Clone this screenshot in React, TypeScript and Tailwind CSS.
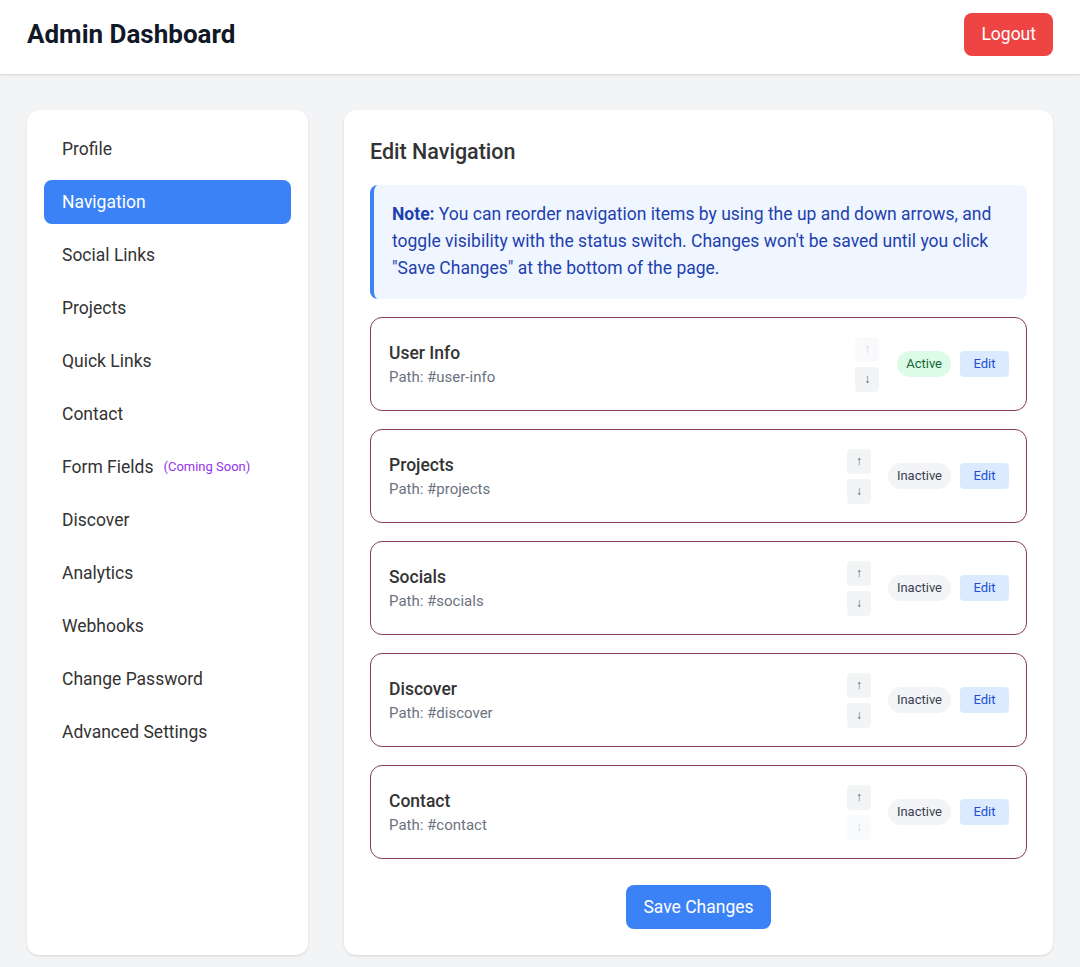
import { useState } from 'react'

interface NavItem {
  id: string
  label: string
  path: string
  active: boolean
}

const sidebarItems = [
  'Profile',
  'Navigation',
  'Social Links',
  'Projects',
  'Quick Links',
  'Contact',
  'Form Fields',
  'Discover',
  'Analytics',
  'Webhooks',
  'Change Password',
  'Advanced Settings',
]

const initialNav: NavItem[] = [
  { id: 'user-info', label: 'User Info', path: '#user-info', active: true },
  { id: 'projects', label: 'Projects', path: '#projects', active: false },
  { id: 'socials', label: 'Socials', path: '#socials', active: false },
  { id: 'discover', label: 'Discover', path: '#discover', active: false },
  { id: 'contact', label: 'Contact', path: '#contact', active: false },
]

export default function App() {
  const [selected, setSelected] = useState('Navigation')
  const [items, setItems] = useState<NavItem[]>(initialNav)

  const move = (index: number, dir: number) => {
    const target = index + dir
    if (target < 0 || target >= items.length) return
    const next = [...items]
    const tmp = next[index]
    next[index] = next[target]
    next[target] = tmp
    setItems(next)
  }

  const toggle = (id: string) => {
    setItems(items.map(i => (i.id === id ? { ...i, active: !i.active } : i)))
  }

  return (
    <div className="min-h-screen bg-[#f3f4f6] font-['Roboto','Noto_Sans',sans-serif]">
      {/* Header */}
      <header className="h-[74px] bg-white shadow-sm flex items-center justify-between px-[27px] pb-[5px]">
        <h1 className="text-[26px] font-bold text-[#111827]">Admin Dashboard</h1>
        <button className="h-[43px] px-[17px] bg-[#ef4444] text-white text-[17.5px] rounded-lg">Logout</button>
      </header>

      <div className="flex gap-[36px] px-[27px] pt-[36px] pb-[36px]">
        {/* Sidebar */}
        <aside className="w-[281px] shrink-0 bg-white rounded-xl px-[17px] pt-[17px] pb-[17px] flex flex-col gap-[9px] shadow-sm">
          {sidebarItems.map(name => (
            <button
              key={name}
              onClick={() => setSelected(name)}
              className={
                selected === name
                  ? 'h-[44px] w-full text-left pl-[18px] rounded-lg bg-[#3b82f6] text-white text-[17.5px] flex items-center'
                  : 'h-[44px] w-full text-left pl-[18px] rounded-lg text-[#333333] text-[17.5px] flex items-center'
              }
            >
              {name}
              {name === 'Form Fields' && (
                <span className="ml-[10px] text-[13px] text-[#9333ea]">(Coming Soon)</span>
              )}
            </button>
          ))}
        </aside>

        {/* Main */}
        <main className="flex-1 bg-white rounded-xl px-[26px] pt-[28px] pb-[26px] shadow-sm">
          <h2 className="text-[21.5px] font-medium text-[#333333] leading-[28px]">Edit Navigation</h2>

          <div className="mt-[19px] bg-[#eff6ff] border-l-4 border-[#3b82f6] rounded-lg pl-[18px] pr-[14px] pt-[16px] pb-[17px] text-[17.5px] leading-[27px] text-[#1e40af]">
            <span className="font-bold">Note:</span> You can reorder navigation items by using the up and down arrows, and toggle visibility with the status switch. Changes won't be saved until you click "Save Changes" at the bottom of the page.
          </div>

          <div className="mt-[18px] flex flex-col gap-[18px]">
            {items.map((item, idx) => (
              <div
                key={item.id}
                className="h-[94px] border border-[#8a3a4e] rounded-xl pl-[18px] pr-[17px] flex items-center justify-between"
              >
                <div className="pt-[2px]">
                  <div className="text-[17.5px] font-medium text-[#333333] leading-[24px]">{item.label}</div>
                  <div className="text-[15px] text-[#6b7280] leading-[24px]">Path: {item.path}</div>
                </div>
                <div className="flex items-center">
                  <div className="flex flex-col gap-[5px]">
                    <button
                      onClick={() => move(idx, -1)}
                      className={
                        idx === 0
                          ? 'w-[24px] h-[25px] rounded bg-[#f9fafb] text-[#d1d5db] text-[12px] flex items-center justify-center'
                          : 'w-[24px] h-[25px] rounded bg-[#f3f4f6] text-[#4b5563] text-[12px] flex items-center justify-center'
                      }
                    >
                      ↑
                    </button>
                    <button
                      onClick={() => move(idx, 1)}
                      className={
                        idx === items.length - 1
                          ? 'w-[24px] h-[25px] rounded bg-[#f9fafb] text-[#d1d5db] text-[12px] flex items-center justify-center'
                          : 'w-[24px] h-[25px] rounded bg-[#f3f4f6] text-[#4b5563] text-[12px] flex items-center justify-center'
                      }
                    >
                      ↓
                    </button>
                  </div>
                  <button
                    onClick={() => toggle(item.id)}
                    className={
                      item.active
                        ? 'ml-[18px] h-[26px] px-[9px] rounded-full bg-[#dcfce7] text-[#166534] text-[13px]'
                        : 'ml-[17px] h-[26px] px-[9px] rounded-full bg-[#f3f4f6] text-[#374151] text-[13px]'
                    }
                  >
                    {item.active ? 'Active' : 'Inactive'}
                  </button>
                  <button className="ml-[9px] h-[26px] w-[49px] rounded bg-[#dbeafe] text-[#1d4ed8] text-[13px]">Edit</button>
                </div>
              </div>
            ))}
          </div>

          <div className="mt-[26px] flex justify-center">
            <button className="h-[44px] px-[17px] bg-[#3b82f6] text-white text-[17.5px] rounded-lg">Save Changes</button>
          </div>
        </main>
      </div>
    </div>
  )
}
